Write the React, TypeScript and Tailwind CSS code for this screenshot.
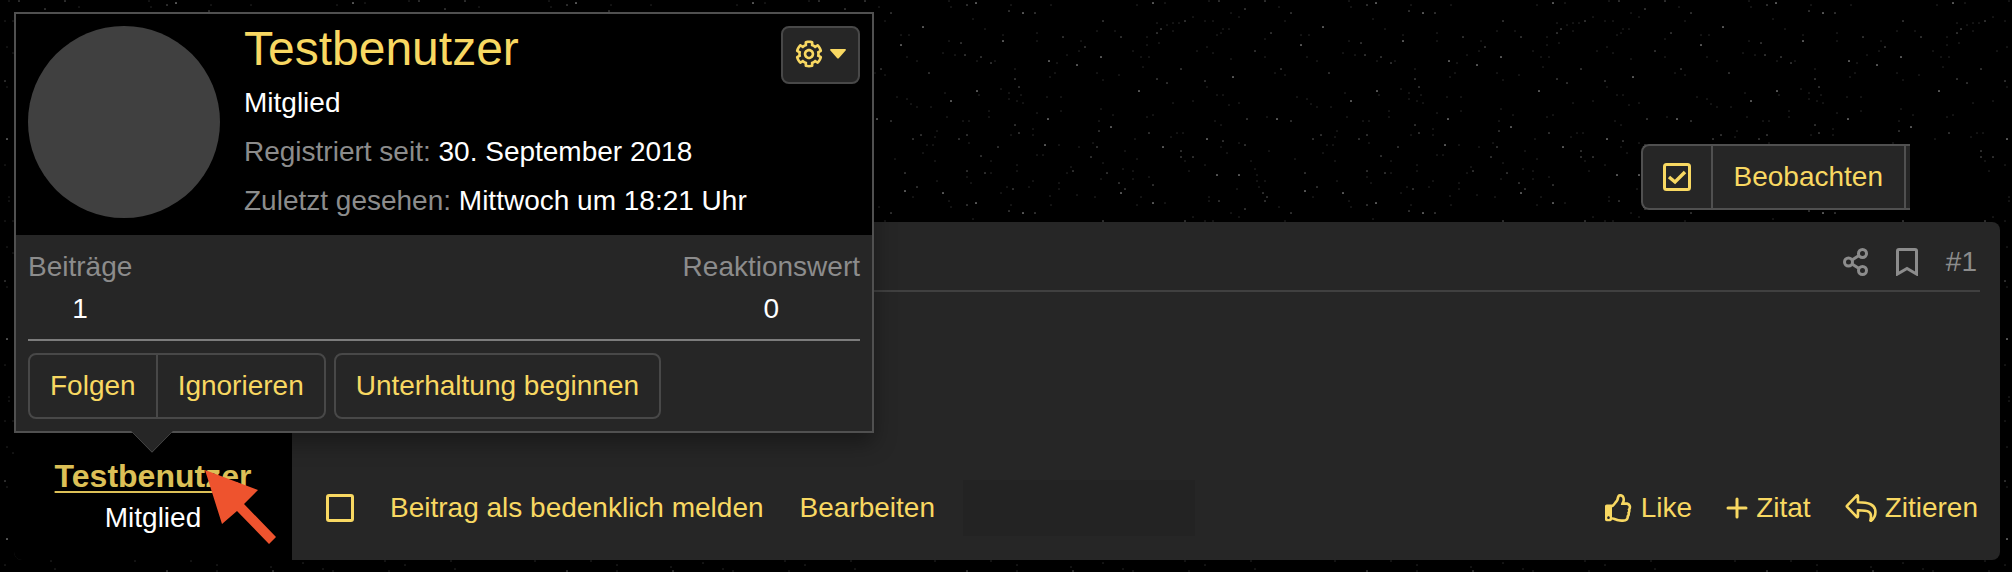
import type { ReactNode } from 'react';
import { FaRegThumbsUp } from 'react-icons/fa';

// [x, y] inside one 400x200 tile, grouped by brightness
const brightStars = [
  [123, 27], [33, 77], [203, 41], [151, 101], [101, 45], [177, 91], [301, 57], [339, 91], [363, 147], [245, 145],
  [17, 175], [39, 175], [105, 191], [143, 193], [321, 193], [77, 119], [176, 3], [248, 119], [7, 139], [223, 13],
  [353, 3], [277, 65], [249, 61], [311, 127],
];

const midStars = [
  [19, 1], [65, 1], [45, 9], [167, 5], [209, 11], [235, 13], [91, 13], [303, 21], [361, 29], [357, 33], [263, 37],
  [321, 37], [161, 43], [285, 47], [165, 55], [181, 57], [129, 73], [215, 79], [219, 87], [81, 69], [357, 79],
  [367, 83], [381, 69], [385, 21], [91, 121], [121, 135], [113, 139], [159, 139], [167, 135], [215, 125], [219, 133],
  [299, 131], [349, 133], [198, 147], [297, 147], [291, 157], [273, 171], [307, 173], [167, 171], [181, 156],
  [105, 173], [117, 187], [63, 193], [67, 197], [213, 189], [353, 185], [319, 183], [325, 189], [381, 151],
  [381, 157], [393, 157], [5, 81], [47, 119], [71, 33], [55, 51], [185, 173], [23, 141], [45, 145], [191, 63],
];

const dimStars = [
  [9, 1], [31, 13], [39, 17], [79, 7], [101, 35], [5, 21], [13, 21], [85, 21], [23, 29], [21, 33], [17, 35], [29, 29],
  [65, 39], [109, 35], [7, 47], [13, 53], [31, 59], [65, 57], [107, 57], [117, 61], [143, 53], [149, 41], [155, 55],
  [85, 75], [75, 73], [7, 87], [17, 95], [23, 95], [29, 105], [39, 103], [67, 117], [97, 97], [107, 99], [111, 104],
  [131, 107], [117, 107], [145, 93], [147, 117], [179, 95], [201, 89], [209, 93], [209, 99], [217, 101], [221, 95],
  [223, 103], [177, 61], [195, 61], [215, 69], [203, 35], [237, 33], [237, 41], [185, 29], [173, 19], [151, 7],
  [149, 1], [211, 5], [251, 5], [337, 5], [365, 3], [297, 31], [315, 31], [347, 37], [347, 45], [333, 51], [341, 57],
  [349, 57], [359, 43], [373, 31], [367, 25], [373, 23], [379, 23], [357, 23], [393, 17], [343, 67], [319, 75],
  [303, 80], [297, 73], [255, 73], [250, 77], [257, 63], [279, 51], [267, 55], [247, 97], [261, 97], [261, 111],
  [237, 113], [189, 111], [189, 117], [169, 121], [163, 121], [233, 129], [233, 135], [211, 135], [169, 143],
  [137, 131], [135, 137], [127, 145], [133, 145], [123, 153], [135, 161], [95, 159], [69, 151], [51, 161], [55, 169],
  [57, 175], [57, 181], [65, 181], [59, 187], [37, 189], [5, 165], [21, 147], [27, 153], [39, 143], [15, 121],
  [21, 125], [191, 161], [217, 165], [217, 171], [191, 173], [167, 177], [171, 183], [137, 181], [113, 197],
  [233, 181], [229, 187], [207, 187], [201, 193], [250, 196], [259, 183], [259, 189], [277, 195], [295, 197],
  [267, 173], [271, 167], [303, 163], [301, 179], [323, 169], [333, 171], [333, 179], [325, 151], [335, 139],
  [337, 159], [349, 177], [341, 197], [365, 203], [389, 171], [385, 161], [371, 137], [377, 133], [383, 133],
  [353, 115], [347, 117], [313, 115], [301, 109], [299, 121], [293, 143], [279, 147], [259, 145], [243, 155],
  [237, 155], [9, 197], [393, 101], [373, 103], [397, 51], [281, 41],
];

const statBlocks = [
  { label: 'Beiträge', value: '1' },
  { label: 'Reaktionswert', value: '0' },
];

const cogPath =
  'M452.515 237l31.843-18.382c9.426-5.441 13.996-16.542 11.177-27.054-11.404-42.531-33.842-80.547-64.058-110.797-7.68-7.688-19.575-9.246-28.985-3.811l-31.785 18.358a196.276 196.276 0 0 0-32.899-19.02V39.541a24.016 24.016 0 0 0-17.842-23.206c-41.761-11.107-86.117-11.121-127.93-.001-10.519 2.798-17.844 12.321-17.844 23.206v36.753a196.276 196.276 0 0 0-32.899 19.02l-31.785-18.358c-9.41-5.435-21.305-3.877-28.985 3.811-30.216 30.25-52.654 68.265-64.058 110.797-2.819 10.512 1.751 21.613 11.177 27.054L59.485 237a197.715 197.715 0 0 0 0 37.999l-31.843 18.382c-9.426 5.441-13.996 16.542-11.177 27.054 11.404 42.531 33.842 80.547 64.058 110.797 7.68 7.688 19.575 9.246 28.985 3.811l31.785-18.358a196.202 196.202 0 0 0 32.899 19.019v36.753a24.016 24.016 0 0 0 17.842 23.206c41.761 11.107 86.117 11.122 127.93.001 10.519-2.798 17.844-12.321 17.844-23.206v-36.753a196.34 196.34 0 0 0 32.899-19.019l31.785 18.358c9.41 5.435 21.305 3.877 28.985-3.811 30.216-30.25 52.654-68.266 64.058-110.797 2.819-10.512-1.751-21.613-11.177-27.054L452.515 275c1.22-12.65 1.22-25.35 0-38zm-52.679 63.019l43.819 25.289a200.138 200.138 0 0 1-33.849 58.528l-43.829-25.309c-31.984 27.397-36.659 30.077-76.168 44.029v50.599a200.917 200.917 0 0 1-67.618 0v-50.599c-39.504-13.95-44.196-16.642-76.168-44.029l-43.829 25.309a200.15 200.15 0 0 1-33.849-58.528l43.819-25.289c-7.63-41.299-7.634-46.719 0-88.038l-43.819-25.289c7.85-21.229 19.31-41.049 33.849-58.529l43.829 25.309c31.984-27.397 36.66-30.078 76.168-44.029V58.845a200.917 200.917 0 0 1 67.618 0v50.599c39.504 13.95 44.196 16.642 76.168 44.029l43.829-25.309a200.143 200.143 0 0 1 33.849 58.529l-43.819 25.289c7.631 41.3 7.634 46.718 0 88.037zM256 160c-52.935 0-96 43.065-96 96s43.065 96 96 96 96-43.065 96-96-43.065-96-96-96zm0 144c-26.468 0-48-21.532-48-48 0-26.467 21.532-48 48-48s48 21.533 48 48c0 26.468-21.532 48-48 48z';

function Stars({ points, opacity }: { points: number[][]; opacity: number }) {
  return (
    <g fill="#fff" fillOpacity={opacity}>
      {points.map(([x, y]) => (
        <rect key={`${x}-${y}`} x={x - 1} y={y - 1} width="2" height="2" rx="0.5" />
      ))}
    </g>
  );
}

function StarBackground() {
  return (
    <svg className="absolute inset-0 h-full w-full" aria-hidden="true">
      <defs>
        <pattern id="stars" width="400" height="200" patternUnits="userSpaceOnUse">
          <Stars points={brightStars} opacity={0.34} />
          <Stars points={midStars} opacity={0.18} />
          <Stars points={dimStars} opacity={0.08} />
        </pattern>
      </defs>
      <rect width="100%" height="100%" fill="url(#stars)" />
    </svg>
  );
}

function ReplyIcon() {
  return (
    <svg viewBox="0 0 576 512" className="h-7 w-8" fill="none" stroke="currentColor" strokeWidth="48" strokeLinejoin="round" aria-hidden="true">
      <path d="M34 235l176 184c9 9 22 3 22-11V297c185 2 272 20 228 181-3 10 6 15 14 9C510 461 552 412 552 331c0-145-130-178-320-179V40c0-13-13-20-22-11L34 213c-6 6-6 16 0 22z" />
    </svg>
  );
}

function PlusIcon() {
  return (
    <svg viewBox="0 0 22 22" className="h-[22px] w-[22px]" fill="none" stroke="currentColor" strokeWidth="3" strokeLinecap="round" aria-hidden="true">
      <path d="M11 2v18M2 11h18" />
    </svg>
  );
}

function ActionLink({ icon, children }: { icon?: ReactNode; children: ReactNode }) {
  return (
    <a href="#" className="flex items-center gap-2 text-[#f8d862]">
      {icon}
      {children}
    </a>
  );
}

function MemberTooltip() {
  return (
    <div className="absolute top-3 left-[14px] z-10 w-[860px] border-2 border-[#505050] bg-[#262626] shadow-[0_10px_20px_rgba(0,0,0,0.35)]">
      <div className="flex items-start gap-6 bg-black px-3 pt-3 pb-[14px]">
        <div className="h-48 w-48 shrink-0 rounded-full bg-[#404040]" />
        <div className="flex-1 pt-px">
          <h4 className="text-[48px] leading-[44px]">
            <a href="#" className="text-[#f8d862]">Testbenutzer</a>
          </h4>
          <div className="mt-3 flex flex-col gap-[9px] text-white">
            <div>Mitglied</div>
            <div>
              <span className="text-[#8c8c8c]">Registriert seit:</span> 30. September 2018
            </div>
            <div>
              <span className="text-[#8c8c8c]">Zuletzt gesehen:</span> Mittwoch um 18:21 Uhr
            </div>
          </div>
        </div>
        <button type="button" aria-label="Moderation" className="flex h-[58px] items-center gap-[7px] rounded-lg border-2 border-[#484848] bg-[#262626] px-3 pb-0.5 text-[#f8d862]">
          <svg viewBox="0 0 512 512" className="h-7 w-7" fill="currentColor" aria-hidden="true">
            <path d={cogPath} />
          </svg>
          <svg viewBox="0 0 16 10" className="h-[10px] w-4" fill="currentColor" aria-hidden="true">
            <path d="M1 0h14c1 0 1.2 0.9 0.6 1.5L9 9c-0.6 0.7-1.4 0.7-2 0L0.4 1.5C-0.2 0.9 0 0 1 0z" />
          </svg>
        </button>
      </div>

      <div className="p-3">
        <div className="flex justify-between text-center">
          {statBlocks.map((stat) => (
            <dl key={stat.label}>
              <dt className="text-[#8c8c8c]">{stat.label}</dt>
              <dd className="leading-[44px] text-white">{stat.value}</dd>
            </dl>
          ))}
        </div>
        <hr className="mt-2 mb-3 border-t-2 border-[#7c7c7c]" />
        <div className="flex gap-2 text-[#f8d862]">
          <div className="flex h-[66px] divide-x-2 divide-[#484848] rounded-lg border-2 border-[#484848]">
            <button type="button" className="px-5">Folgen</button>
            <button type="button" className="px-5">Ignorieren</button>
          </div>
          <button type="button" className="h-[66px] rounded-lg border-2 border-[#484848] px-5">
            Unterhaltung beginnen
          </button>
        </div>
      </div>

      <svg viewBox="0 0 42 22" className="absolute top-full left-[115px] h-[22px] w-[42px]" aria-hidden="true">
        <path d="M0 0h42L21 22z" fill="#262626" />
        <path d="M0 0l21 21L42 0" fill="none" stroke="#404040" strokeWidth="1" />
      </svg>
    </div>
  );
}

function WatchButtons() {
  return (
    <div className="flex justify-end">
      <div className="flex h-[66px] divide-x-2 divide-[#505050] rounded-l-lg border-2 border-r-0 border-[#505050] bg-[#262626] text-[#f8d862]">
        <button type="button" aria-label="Auswahl" className="px-5">
          <svg viewBox="0 0 28 28" className="h-7 w-7" fill="none" stroke="currentColor" strokeWidth="3" aria-hidden="true">
            <rect x="1.5" y="1.5" width="25" height="25" rx="2" />
            <path d="M6 14l6 5L22 9" strokeWidth="3.5" />
          </svg>
        </button>
        <button type="button" className="px-[21px]">Beobachten</button>
        <span className="w-1" />
      </div>
      <div className="mr-6 w-[66px] bg-black" />
    </div>
  );
}

function Post() {
  return (
    <article className="mt-3 flex min-h-[338px] overflow-hidden rounded-lg bg-[#262626]">
      <div className="relative flex w-[278px] shrink-0 flex-col items-center justify-end bg-black pb-[22px]">
        <a href="#" className="text-[32px] leading-[44px] font-bold text-[#dcc057] underline decoration-2 underline-offset-4">
          Testbenutzer
        </a>
        <div className="text-white">Mitglied</div>
        <svg viewBox="0 0 71 74" className="absolute right-4 bottom-4 h-[74px] w-[71px]" fill="#ee532e" aria-hidden="true">
          <path d="M0 0L53 20 39 34 71 67 64 74 32 41 17 54z" />
        </svg>
      </div>

      <div className="flex flex-1 flex-col">
        <header className="mr-5 flex items-center justify-end gap-7 border-b-2 border-[#404040] pt-5 pr-[3px] pb-2 text-[#8c8c8c]">
          <a href="#" aria-label="Teilen">
            <svg viewBox="0 0 25 28" className="h-7 w-[25px]" fill="none" stroke="currentColor" strokeWidth="3" aria-hidden="true">
              <circle cx="5.5" cy="14" r="4" />
              <circle cx="19.5" cy="5.5" r="4" />
              <circle cx="19.5" cy="22.5" r="4" />
              <path d="M9 12l7-4.5M9 16l7 4.5" />
            </svg>
          </a>
          <a href="#" aria-label="Lesezeichen">
            <svg viewBox="0 0 22 28" className="h-7 w-[22px]" fill="none" stroke="currentColor" strokeWidth="3" aria-hidden="true">
              <path d="M1.5 26V3c0-1 0.5-1.5 1.5-1.5h16c1 0 1.5 0.5 1.5 1.5v23L11 20.5z" />
            </svg>
          </a>
          <a href="#">#1</a>
        </header>

        <div className="flex-1" />

        <footer className="flex items-center justify-between pr-[22px] pb-6 pl-[34px]">
          <div className="flex items-center gap-9">
            <input type="checkbox" aria-label="Beitrag auswählen" className="h-7 w-7 appearance-none rounded-[3px] border-[3px] border-[#f8d862]" />
            <ActionLink>Beitrag als bedenklich melden</ActionLink>
            <ActionLink>Bearbeiten</ActionLink>
            <div className="-ml-2 h-14 w-[232px] bg-[#232323]" />
          </div>
          <div className="flex items-center gap-[34px]">
            <ActionLink icon={<FaRegThumbsUp className="h-7 w-7" aria-hidden="true" />}>Like</ActionLink>
            <ActionLink icon={<PlusIcon />}>Zitat</ActionLink>
            <ActionLink icon={<ReplyIcon />}>Zitieren</ActionLink>
          </div>
        </footer>
      </div>
    </article>
  );
}

export default function App() {
  return (
    <div className="relative min-h-screen overflow-hidden bg-black font-['Liberation_Sans',Arial,sans-serif] text-[28px] leading-[40px]">
      <StarBackground />
      <main className="relative pt-36 pr-3 pb-3 pl-[14px]">
        <WatchButtons />
        <Post />
      </main>
      <MemberTooltip />
    </div>
  );
}
